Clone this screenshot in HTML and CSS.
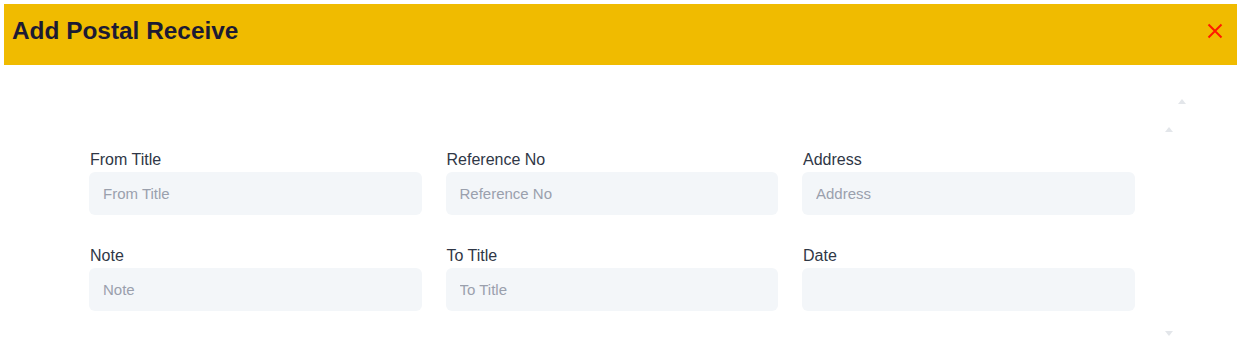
FILE: index.html
```html
<!DOCTYPE html>
<html>
<head>
<meta charset="utf-8">
<link rel="stylesheet" href="styles.css">
</head>
<body>
<div class="modal">
  <header class="modal-header">
    <h1 class="modal-title">Add Postal Receive</h1>
    <button class="close-btn" aria-label="Close">
      <svg width="16" height="16" viewBox="0 0 16 16"><path d="M1.5 1.5L14.5 14.5M14.5 1.5L1.5 14.5" stroke="#ff1a00" stroke-width="2" stroke-linecap="butt"/></svg>
    </button>
  </header>
  <div class="modal-body">
    <span class="scroll-arrow up outer-up"></span>
    <span class="scroll-arrow up inner-up"></span>
    <span class="scroll-arrow down inner-down"></span>
    <form class="form-grid">
      <label class="field">
        <span class="field-label">From Title</span>
        <input class="field-input" type="text" placeholder="From Title">
      </label>
      <label class="field">
        <span class="field-label">Reference No</span>
        <input class="field-input" type="text" placeholder="Reference No">
      </label>
      <label class="field">
        <span class="field-label">Address</span>
        <input class="field-input" type="text" placeholder="Address">
      </label>
      <label class="field">
        <span class="field-label">Note</span>
        <input class="field-input" type="text" placeholder="Note">
      </label>
      <label class="field">
        <span class="field-label">To Title</span>
        <input class="field-input" type="text" placeholder="To Title">
      </label>
      <label class="field">
        <span class="field-label">Date</span>
        <input class="field-input" type="text">
      </label>
    </form>
  </div>
</div>
</body>
</html>
```
FILE: styles.css
```css
* { box-sizing: border-box; }
html, body {
  margin: 0;
  padding: 0;
  background: #ffffff;
  font-family: "Liberation Sans", Arial, sans-serif;
  overflow: hidden;
}
.modal {
  padding: 4px 4px 0 4px;
}
.modal-header {
  height: 61px;
  background: #f0bb00;
  display: flex;
  align-items: center;
  justify-content: space-between;
  padding: 0 14px 7px 8px;
}
.modal-title {
  margin: 0;
  font-size: 24.4px;
  line-height: 28px;
  font-weight: 700;
  color: #1c1a33;
}
.close-btn {
  background: none;
  border: 0;
  padding: 0;
  width: 16px;
  height: 16px;
  display: flex;
  cursor: pointer;
}
.modal-body {
  position: relative;
  padding: 85px 0 0 85px;
  height: 274px;
}
.form-grid {
  display: grid;
  grid-template-columns: 332.5px 332.5px 332.5px;
  column-gap: 24px;
  row-gap: 31px;
}
.field {
  display: flex;
  flex-direction: column;
  gap: 2px;
}
.field-label {
  font-size: 16px;
  line-height: 20px;
  color: #2f3746;
  padding-left: 1px;
}
.field-input {
  height: 43px;
  border: 0;
  border-radius: 6px;
  background: #f3f6f9;
  padding: 0 14px;
  font-family: "Liberation Sans", Arial, sans-serif;
  font-size: 15px;
  color: #2f3746;
  outline: none;
}
.field-input::placeholder {
  color: #9aa0ad;
}
.scroll-arrow {
  position: absolute;
  width: 0;
  height: 0;
  border-left: 4.5px solid transparent;
  border-right: 4.5px solid transparent;
}
.scroll-arrow.up { border-bottom: 5px solid #e3e6ea; }
.scroll-arrow.down { border-top: 5px solid #e3e6ea; }
.outer-up { left: 1174px; top: 34px; }
.inner-up { left: 1161px; top: 62px; }
.inner-down { left: 1161px; top: 266px; }
```
